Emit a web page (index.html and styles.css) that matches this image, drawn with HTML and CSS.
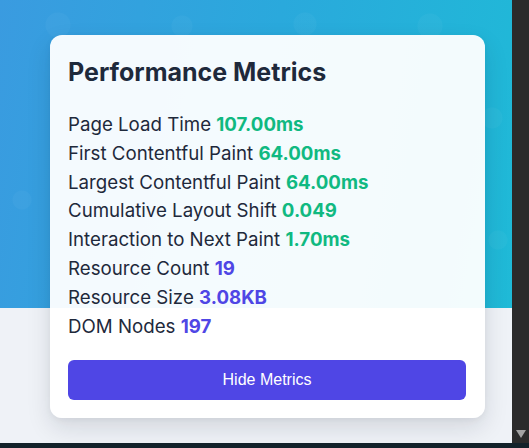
FILE: index.html
```html
<!DOCTYPE html>
<html lang="en">
<head>
<meta charset="utf-8">
<title>Performance Metrics</title>
<link rel="stylesheet" href="styles.css">
</head>
<body>
<div class="window">
  <div class="viewport">
    <main class="page">
      <section class="card">
        <h2 class="title">Performance Metrics</h2>
        <ul class="metrics">
          <li>Page Load Time <b class="good">107.00ms</b></li>
          <li>First Contentful Paint <b class="good">64.00ms</b></li>
          <li>Largest Contentful Paint <b class="good">64.00ms</b></li>
          <li>Cumulative Layout Shift <b class="good">0.049</b></li>
          <li>Interaction to Next Paint <b class="good">1.70ms</b></li>
          <li>Resource Count <b class="info">19</b></li>
          <li>Resource Size <b class="info">3.08KB</b></li>
          <li>DOM Nodes <b class="info">197</b></li>
        </ul>
        <button class="toggle" type="button">Hide Metrics</button>
      </section>
    </main>
    <div class="scrollbar">
      <span class="arrow"></span>
    </div>
  </div>
  <div class="strip"></div>
</div>
</body>
</html>
```
FILE: styles.css
```css
* { box-sizing: border-box; }
html, body { margin: 0; padding: 0; }
body {
  width: 529px;
  height: 448px;
  overflow: hidden;
  font-family: "Inter", "Noto Sans", sans-serif;
}
.window {
  display: flex;
  flex-direction: column;
  height: 448px;
}
.viewport {
  display: flex;
  height: 443px;
}
.page {
  flex: 1;
  padding: 35px 0 0 50px;
  background:
    radial-gradient(circle at 58px 25px, rgba(255,255,255,0.03) 0 12px, transparent 13px) 0 0 / 100% 308px no-repeat,
    radial-gradient(circle at 182px 26px, rgba(255,255,255,0.03) 0 10px, transparent 11px) 0 0 / 100% 308px no-repeat,
    radial-gradient(circle at 305px 24px, rgba(255,255,255,0.03) 0 11px, transparent 12px) 0 0 / 100% 308px no-repeat,
    radial-gradient(circle at 430px 26px, rgba(255,255,255,0.03) 0 12px, transparent 13px) 0 0 / 100% 308px no-repeat,
    radial-gradient(circle at 492px 118px, rgba(255,255,255,0.03) 0 10px, transparent 11px) 0 0 / 100% 308px no-repeat,
    radial-gradient(circle at 498px 240px, rgba(255,255,255,0.03) 0 9px, transparent 10px) 0 0 / 100% 308px no-repeat,
    radial-gradient(circle at 22px 200px, rgba(255,255,255,0.03) 0 9px, transparent 10px) 0 0 / 100% 308px no-repeat,
    linear-gradient(100deg, #3a9be0 0%, #2aa9dc 50%, #1fbad7 100%) 0 0 / 100% 308px no-repeat,
    #eff2f7;
}
.card {
  width: 435px;
  height: 383px;
  padding: 22px 19px 18px 18px;
  background: rgba(255,255,255,0.95);
  border-radius: 12px;
  box-shadow: 0 10px 25px rgba(15, 23, 42, 0.12), 0 2px 6px rgba(15, 23, 42, 0.05);
  display: flex;
  flex-direction: column;
}
.title {
  margin: 0 0 24px;
  font-size: 25px;
  line-height: 30px;
  font-weight: 700;
  color: #1e293b;
}
.metrics {
  list-style: none;
  margin: 0;
  padding: 0;
  font-size: 18.7px;
  line-height: 28.8px;
  color: #1e293b;
}
.metrics b { font-weight: 700; }
.good { color: #10b981; }
.info { color: #4f46e5; }
.toggle {
  margin-top: 19px;
  height: 40px;
  width: 100%;
  border: 0;
  border-radius: 6px;
  background: #4f46e5;
  color: #ffffff;
  font-family: "Liberation Sans", Arial, sans-serif;
  font-size: 16px;
}
.scrollbar {
  width: 17px;
  background: #2b2b2b;
  display: flex;
  flex-direction: column;
  justify-content: flex-end;
  align-items: center;
  padding-bottom: 5px;
}
.arrow {
  width: 0;
  height: 0;
  border-left: 5px solid transparent;
  border-right: 5px solid transparent;
  border-top: 8px solid #a3a3a3;
}
.strip {
  height: 5px;
  background: #13222a;
}
```
